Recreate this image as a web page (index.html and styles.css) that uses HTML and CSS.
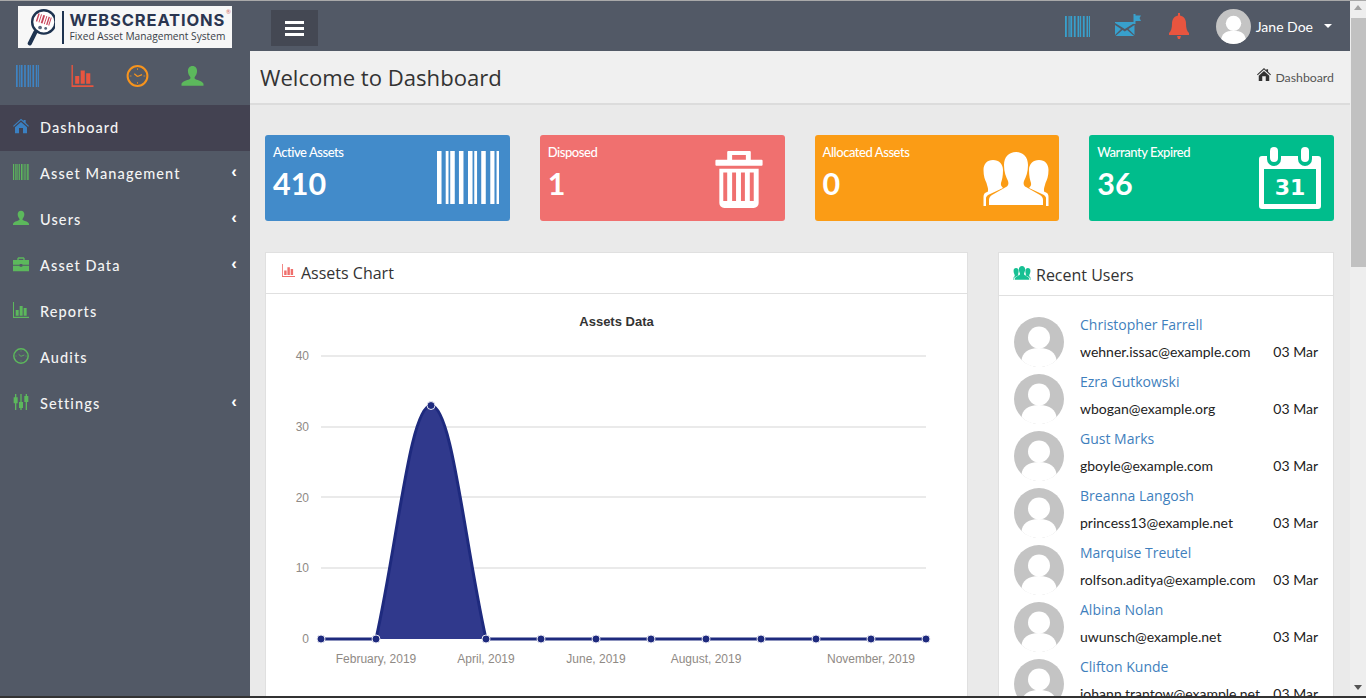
FILE: index.html
```html
<!DOCTYPE html>
<html lang="en">
<head>
<meta charset="utf-8">
<title>Dashboard</title>
<link rel="stylesheet" href="styles.css">
</head>
<body>
<svg class="defs" width="0" height="0" aria-hidden="true">
  <symbol id="i-barcode" viewBox="0 0 178 157" preserveAspectRatio="none"><path fill="currentColor" d="M0 0h13v157H0zM25 0h8v157h-8zM38 0h13v157H38zM63 0h13v157H63zM89 0h13v157H89zM107 0h8v157h-8zM127 0h13v157h-13zM153 0h12v157h-12zM171 0h7v157h-7z"/></symbol>
  <symbol id="i-chart" viewBox="0 0 24 24"><path fill="currentColor" d="M0 0h1.500v22H24v2H0zM4 12h4.500v8.500H4zM10 6h4.500v14.500H10zM16 9h4.500v11.500H16z"/></symbol>
  <symbol id="i-clock" viewBox="0 0 24 24"><circle cx="12" cy="12" r="10.800" fill="none" stroke="currentColor" stroke-width="2.200"/><path d="M12 3.500v2M12 18.500v2M3.500 12h2M18.500 12h2" fill="none" stroke="currentColor" stroke-width=".8"/><path d="M12 12.500l-3.500-3M12 12.500l5-2" fill="none" stroke="currentColor" stroke-width="1.300"/></symbol>
  <symbol id="i-user" viewBox="0 0 24 24"><path fill="currentColor" d="M12 1c3.200 0 5 2.500 5 5.500 0 2.800-1.300 5-2.500 6.500-.5.800-.3 2 .8 2.500 3 1.300 7.700 2.300 8.700 5v2H0v-2c1-2.700 5.700-3.700 8.700-5 1.100-.5 1.300-1.700.8-2.500C8.300 11.500 7 9.300 7 6.500 7 3.500 8.800 1 12 1z"/></symbol>
  <symbol id="i-home" viewBox="0 0 24 24"><path fill="currentColor" d="M12 1l4 3.500V3h3v4.200l5 4.800-1.200 1.300L12 3.500 1.200 13.300 0 12zM3 14l9-8 9 8v9h-6v-8H9v8H3z"/></symbol>
  <symbol id="i-case" viewBox="0 0 24 24"><path fill="currentColor" d="M8 2h8l1.500 1.500V6H24v7H14v-1h-4v1H0V6h6.500V3.500zM8.500 4v2h7V4zM0 14.500h10V16h4v-1.500h10V23H0z"/></symbol>
  <symbol id="i-sliders" viewBox="0 0 24 24"><path fill="currentColor" d="M3 0h2v5h2v9H5v10H3V14H1V5h2zM11 0h2v12h2v9h-2v3h-2v-3H9v-9h2zM19 0h2v3h2v9h-2v12h-2V12h-2V3h2z"/></symbol>
  <symbol id="i-trash" viewBox="0 0 48 58"><path fill="currentColor" d="M13 0h22a1 1 0 0 1 1 1v8h11a1 1 0 0 1 1 1v4a1 1 0 0 1-1 1H1a1 1 0 0 1-1-1v-4a1 1 0 0 1 1-1h11V1a1 1 0 0 1 1-1zm4 4v5h14V4zM4 18h40v35a5 5 0 0 1-5 5H9a5 5 0 0 1-5-5zm4 4v29h4V22zm9 0v29h4V22zm9 0v29h4V22zm9 0v29h4V22z"/></symbol>
  <symbol id="i-users" viewBox="0 0 66 54"><path fill="currentColor" d="M10 8C16 8 20 12 20 18C20 24 19 28 18 31C17.500 33 18.500 34.500 20 36L5 43C4 44 3 45 3 46V54H.5V45C.5 43 1 42 2 41L5 39.500C5.500 36 4 34 3.500 31C2 28 .5 24 .5 18C.5 12 4 8 10 8Z"/><path fill="currentColor" transform="matrix(-1 0 0 1 66 0)" d="M10 8C16 8 20 12 20 18C20 24 19 28 18 31C17.500 33 18.500 34.500 20 36L5 43C4 44 3 45 3 46V54H.5V45C.5 43 1 42 2 41L5 39.500C5.500 36 4 34 3.500 31C2 28 .5 24 .5 18C.5 12 4 8 10 8Z"/><path fill="currentColor" d="M33 0C40 0 45 5 45 13C45 20 43 25 41 29C40 32 41 34 43 35L57 43C59 44 60 46 60 48V53H6V48C6 46 7 44 9 43L23 35C25 34 26 32 25 29C23 25 21 20 21 13C21 5 26 0 33 0Z"/></symbol>
  <symbol id="i-bell" viewBox="0 0 20 26"><path fill="currentColor" d="M9 0h2v2.500c4 .8 6 4 6 8 0 5 1 7.500 3 9.500v2H0v-2c2-2 3-4.500 3-9.500 0-4 2-7.200 6-8zM8 23h4l-1 3H9z"/></symbol>
  <symbol id="i-mail" viewBox="0 0 26 22"><path fill="currentColor" d="M0 8h19.500v1L9.800 15 0 9zM0 11l6 4-6 6zM19.500 11v10l-6-6zM7.500 16l2.300 1.500 2.300-1.500 7 6H.500zM18.500 0h2v1.500h5.500l-1.500 2.500L26 7h-5.500v3h-2z"/></symbol>
  <symbol id="i-avatar" viewBox="0 0 50 50"><circle cx="25" cy="25" r="25" fill="#c4c4c4"/><circle cx="25" cy="20.500" r="11" fill="#fff"/><path fill="#fff" d="M7.500 43c1-7 6-12 17.500-12S41.500 36 42.500 43C38 47.500 32 50 25 50S12 47.500 7.500 43z"/></symbol>
</svg>
<div class="window">
  <div class="app">
    <aside class="sidebar">
      <div class="logo-row">
        <div class="logo">
          <svg class="logo-mark" viewBox="0 0 30 40"><circle cx="18" cy="14" r="12.500" fill="#fff" stroke="#1e3350" stroke-width="2.500"/><g transform="rotate(18 18 13)"><path d="M10 7h1.500v9H10zM13 7h1v9h-1zM15.500 7h2v9h-2zM19 7h1v9h-1zM21.500 7h1.500v9h-1.500zM24 7h1v9h-1z" fill="#c8445a"/></g><circle cx="14" cy="20" r="2" fill="#56657c"/><circle cx="20" cy="21" r="1.500" fill="#56657c"/><path d="M9 25L3 37" stroke="#1e3350" stroke-width="4.500" stroke-linecap="round"/></svg>
          <span class="logo-bar"></span>
          <span class="logo-text"><span class="logo-name">WEBSCREATIONS</span><span class="logo-sub">Fixed Asset Management System</span></span>
          <span class="logo-reg">®</span>
        </div>
      </div>
      <div class="quick">
        <svg class="q-icon c-blue"><use href="#i-barcode"/></svg>
        <svg class="q-icon c-red"><use href="#i-chart"/></svg>
        <svg class="q-icon c-orange"><use href="#i-clock"/></svg>
        <svg class="q-icon c-green"><use href="#i-user"/></svg>
      </div>
      <nav class="menu">
        <a class="item active"><svg class="m-icon c-home"><use href="#i-home"/></svg><span class="m-label">Dashboard</span></a>
        <a class="item"><svg class="m-icon c-green"><use href="#i-barcode"/></svg><span class="m-label">Asset Management</span><span class="chev">‹</span></a>
        <a class="item"><svg class="m-icon c-green"><use href="#i-user"/></svg><span class="m-label">Users</span><span class="chev">‹</span></a>
        <a class="item"><svg class="m-icon c-green"><use href="#i-case"/></svg><span class="m-label">Asset Data</span><span class="chev">‹</span></a>
        <a class="item"><svg class="m-icon c-green"><use href="#i-chart"/></svg><span class="m-label">Reports</span></a>
        <a class="item"><svg class="m-icon c-green"><use href="#i-clock"/></svg><span class="m-label">Audits</span></a>
        <a class="item"><svg class="m-icon c-green"><use href="#i-sliders"/></svg><span class="m-label">Settings</span><span class="chev">‹</span></a>
      </nav>
    </aside>
    <div class="main">
      <header class="topbar">
        <button class="burger"><span></span><span></span><span></span></button>
        <div class="top-right">
          <svg class="t-barcode"><use href="#i-barcode"/></svg>
          <svg class="t-mail"><use href="#i-mail"/></svg>
          <svg class="t-bell"><use href="#i-bell"/></svg>
          <div class="user"><svg class="t-avatar"><use href="#i-avatar"/></svg><span class="user-name">Jane Doe</span><span class="caret"></span></div>
        </div>
      </header>
      <div class="page-head">
        <h1 class="title">Welcome to Dashboard</h1>
        <div class="crumb"><svg class="crumb-icon"><use href="#i-home"/></svg><span>Dashboard</span></div>
      </div>
      <div class="content">
        <section class="cards">
          <div class="card bg-blue"><div><div class="card-label">Active Assets</div><div class="card-num">410</div></div><svg class="card-barcode"><use href="#i-barcode"/></svg></div>
          <div class="card bg-red"><div><div class="card-label">Disposed</div><div class="card-num">1</div></div><svg class="card-trash"><use href="#i-trash"/></svg></div>
          <div class="card bg-orange"><div><div class="card-label">Allocated Assets</div><div class="card-num">0</div></div><svg class="card-users"><use href="#i-users"/></svg></div>
          <div class="card bg-teal"><div><div class="card-label">Warranty Expired</div><div class="card-num">36</div></div>
            <svg class="card-cal" viewBox="0 0 62 62">
              <path class="cal-frame" fill-rule="evenodd" d="M3 9H59a3 3 0 0 1 3 3V59a3 3 0 0 1-3 3H3a3 3 0 0 1-3-3V12a3 3 0 0 1 3-3zM5 22V57H57V22z"/>
              <rect class="cal-halo" x="8" y="0" width="14" height="19" rx="7"/><rect class="cal-halo" x="39" y="0" width="14" height="19" rx="7"/>
              <rect class="cal-ring" x="11" y="0" width="8" height="15" rx="4"/><rect class="cal-ring" x="42" y="0" width="8" height="15" rx="4"/>
              <text class="cal-num" x="31" y="47.500" text-anchor="middle">31</text>
            </svg>
          </div>
        </section>
        <section class="panels">
          <div class="panel chart-panel">
            <div class="panel-head chart-head"><svg class="p-icon c-pink"><use href="#i-chart"/></svg><span>Assets Chart</span></div>
            <svg class="chart" viewBox="266 294 701 402" width="701" height="402">
              <text class="ch-title" x="616.500" y="325.500" text-anchor="middle">Assets Data</text>
              <g class="grid"><path d="M321 356H926M321 427H926M321 497H926M321 568H926"/></g>
              <g class="y" text-anchor="end"><text x="309" y="360">40</text><text x="309" y="431">30</text><text x="309" y="502">20</text><text x="309" y="572">10</text><text x="309" y="643">0</text></g>
              <path class="area" d="M321 639L376 639C398 540 410 405.500 431 405.500C452 405.500 464 540 486 639L926 639Z"/>
              <path class="line" d="M321 639L376 639C398 540 410 405.500 431 405.500C452 405.500 464 540 486 639L926 639"/>
              <g class="pts">
                <circle cx="321" cy="639" r="4"/><circle cx="376" cy="639" r="4"/><circle cx="431" cy="405.500" r="4"/><circle cx="486" cy="639" r="4"/><circle cx="541" cy="639" r="4"/><circle cx="596" cy="639" r="4"/><circle cx="651" cy="639" r="4"/><circle cx="706" cy="639" r="4"/><circle cx="761" cy="639" r="4"/><circle cx="816" cy="639" r="4"/><circle cx="871" cy="639" r="4"/><circle cx="926" cy="639" r="4"/>
              </g>
              <g class="x" text-anchor="middle"><text x="376" y="663">February, 2019</text><text x="486" y="663">April, 2019</text><text x="596" y="663">June, 2019</text><text x="706" y="663">August, 2019</text><text x="871" y="663">November, 2019</text></g>
            </svg>
          </div>
          <div class="panel users-panel">
            <div class="panel-head users-head"><svg class="p-icon2 c-teal"><use href="#i-users"/></svg><span>Recent Users</span></div>
            <ul class="users">
              <li class="u"><svg class="u-av"><use href="#i-avatar"/></svg><div class="u-info"><a class="u-name">Christopher Farrell</a><div class="u-line"><span>wehner.issac@example.com</span><span>03 Mar</span></div></div></li>
              <li class="u"><svg class="u-av"><use href="#i-avatar"/></svg><div class="u-info"><a class="u-name">Ezra Gutkowski</a><div class="u-line"><span>wbogan@example.org</span><span>03 Mar</span></div></div></li>
              <li class="u"><svg class="u-av"><use href="#i-avatar"/></svg><div class="u-info"><a class="u-name">Gust Marks</a><div class="u-line"><span>gboyle@example.com</span><span>03 Mar</span></div></div></li>
              <li class="u"><svg class="u-av"><use href="#i-avatar"/></svg><div class="u-info"><a class="u-name">Breanna Langosh</a><div class="u-line"><span>princess13@example.net</span><span>03 Mar</span></div></div></li>
              <li class="u"><svg class="u-av"><use href="#i-avatar"/></svg><div class="u-info"><a class="u-name">Marquise Treutel</a><div class="u-line"><span>rolfson.aditya@example.com</span><span>03 Mar</span></div></div></li>
              <li class="u"><svg class="u-av"><use href="#i-avatar"/></svg><div class="u-info"><a class="u-name">Albina Nolan</a><div class="u-line"><span>uwunsch@example.net</span><span>03 Mar</span></div></div></li>
              <li class="u"><svg class="u-av"><use href="#i-avatar"/></svg><div class="u-info"><a class="u-name">Clifton Kunde</a><div class="u-line"><span>johann.trantow@example.net</span><span>03 Mar</span></div></div></li>
            </ul>
          </div>
        </section>
      </div>
    </div>
    <div class="scrollbar"><span class="arrow up"></span><span class="thumb"></span><span class="track"></span><span class="arrow down"></span></div>
  </div>
</div>
</body>
</html>
```

FILE: styles.css
```css
* { box-sizing: border-box; }
html, body { margin: 0; height: 698px; overflow: hidden; }
body { font-family: "Lato", "Liberation Sans", sans-serif; background: #eaeaea; }
.defs { position: absolute; }
.window { height: 698px; border-top: 1px solid #a9a9a9; border-bottom: 2px solid #333; overflow: hidden; }
.app { display: flex; height: 100%; }

.c-blue { color: #3e84c4; }
.c-red { color: #e8553f; }
.c-orange { color: #f7941d; }
.c-green { color: #5cb85c; }
.c-home { color: #3a80c2; }
.c-pink { color: #ef6f6c; }
.c-teal { color: #17c093; }

.sidebar { width: 250px; flex: none; background: #525966; height: 697px; }
.logo-row { height: 50px; padding: 5px 0 0 18px; }
.logo { position: relative; width: 214px; height: 42px; background: #f7f7f7; display: flex; align-items: center; padding-left: 9px; }
.logo-mark { width: 28px; height: 39px; flex: none; }
.logo-bar { width: 1.500px; height: 33px; background: #1e3350; flex: none; margin: 0 6px 0 7px; }
.logo-text { display: flex; flex-direction: column; }
.logo-name { font-family: "Inter", sans-serif; font-weight: 700; font-size: 16.500px; line-height: 18px; color: #2a3550; letter-spacing: .85px; white-space: nowrap; }
.logo-sub { font-family: "Open Sans", sans-serif; font-size: 10.200px; line-height: 15px; color: #3a3f48; white-space: nowrap; }
.logo-reg { position: absolute; right: 1px; top: 2px; font-size: 6px; color: #d06a6a; }
.quick { height: 54px; display: flex; align-items: center; gap: 32px; padding: 0 0 4px 16px; }
.q-icon { width: 23px; height: 22px; flex: none; }

.item { display: flex; align-items: center; height: 46px; padding: 0 13px; color: #fff; }
.item.active { background: #434251; }
.m-icon { width: 16px; height: 16px; flex: none; margin: -5px 11px 0 0; }
.m-label { flex: 1; font-size: 14.500px; font-weight: 500; letter-spacing: 1.100px; color: #f4f4f4; margin-top: -2px; }
.chev { font-family: "Liberation Sans", sans-serif; font-size: 17px; font-weight: 700; line-height: 1; margin: -6px 0 0 0; }

.main { flex: 1; min-width: 0; display: flex; flex-direction: column; }
.topbar { height: 50px; flex: none; background: #525966; display: flex; align-items: center; justify-content: space-between; padding: 0 18px 0 21px; }
.burger { width: 47px; height: 36px; margin-top: 4px; border: 0; background: #444853; display: flex; flex-direction: column; justify-content: center; align-items: center; gap: 3px; padding: 0; }
.burger span { width: 19px; height: 3px; background: #fff; }
.top-right { display: flex; align-items: center; }
.t-barcode { width: 25px; height: 21px; color: #38a0cc; margin-right: 25px; }
.t-mail { width: 26px; height: 22px; color: #38a0cc; margin: -2px 28px 0 0; }
.t-bell { width: 20px; height: 26px; color: #e8553f; margin: -1px 27px 0 0; }
.t-avatar { width: 35px; height: 35px; margin-right: 5px; }
.user { display: flex; align-items: center; }
.user-name { font-size: 14px; color: #fff; }
.caret { width: 0; height: 0; border: 4.500px solid transparent; border-top: 4.500px solid #fff; border-bottom: 0; margin-left: 11px; }

.page-head { height: 54px; flex: none; background: #f0f0f0; border-bottom: 2px solid #dcdcdc; display: flex; align-items: center; justify-content: space-between; padding: 0 16px 0 10px; }
.title { margin: 0; font-family: "Open Sans", sans-serif; font-weight: 400; font-size: 22.100px; color: #333; }
.crumb { display: flex; align-items: center; font-size: 12.300px; color: #555; gap: 4px; }
.crumb-icon { width: 14px; height: 15px; color: #333; margin-top: -5px; }

.content { flex: 1; min-height: 0; padding: 30px 16px 0 15px; overflow: hidden; }
.cards { display: grid; grid-template-columns: repeat(4, 1fr); gap: 30px; }
.card { height: 86px; border-radius: 3px; color: #fff; display: flex; justify-content: space-between; padding: 0 12px 0 8px; }
.bg-blue { background: #428bca; }
.bg-red { background: #f0706f; }
.bg-orange { background: #fb9c15; }
.bg-teal { background: #00bd8c; }
.card-label { font-size: 13px; font-weight: 500; margin-top: 9px; line-height: 16px; letter-spacing: -.45px; }
.card-num { font-family: "Lato", sans-serif; font-size: 30.500px; font-weight: 700; line-height: 42px; margin-top: 2px; }
.card-barcode { width: 62px; height: 53px; margin: 16px -1px 0 0; }
.card-trash { width: 48px; height: 57px; margin-top: 16px; margin-right: 10px; }
.card-users { width: 66px; height: 54px; margin-top: 17px; margin-right: -2px; }
.card-cal { width: 62px; height: 62px; margin: 12px 1px 0 0; flex: none; }
.cal-frame, .cal-ring { fill: #fff; }
.cal-halo { fill: #00bd8c; }
.cal-num { font-family: "DejaVu Sans", sans-serif; font-weight: 700; font-size: 22px; fill: #fff; }

.panels { display: flex; gap: 30px; margin-top: 31px; align-items: flex-start; }
.panel { background: #fff; border: 1px solid #e0e0e0; }
.chart-panel { width: 703px; flex: none; height: 500px; }
.users-panel { flex: 1; min-width: 0; height: 500px; }
.panel-head { display: flex; align-items: center; font-family: "Open Sans", sans-serif; font-size: 16px; color: #333; border-bottom: 1px solid #e0e0e0; padding-left: 16px; }
.chart-head { height: 41px; padding-left: 15px; }
.users-head { height: 43px; padding: 2px 0 0 14px; }
.p-icon { width: 15px; height: 13px; margin: -5px 5px 0 0; }
.p-icon2 { width: 18px; height: 14px; margin: -5px 5px 0 0; }
.chart { display: block; }
.ch-title { font-family: "Liberation Sans", sans-serif; font-size: 13px; font-weight: 700; fill: #333; }
.grid path { stroke: #e4e4e4; stroke-width: 1.500; fill: none; }
.y text, .x text { font-family: "Liberation Sans", sans-serif; font-size: 12px; fill: #8f8a85; }
.area { fill: #30398c; }
.line { fill: none; stroke: #1e2a7e; stroke-width: 3; }
.pts circle { fill: #1e2a7e; stroke: #e8e8f2; stroke-width: 1; }

.users { list-style: none; margin: 0; padding: 21px 15px 0 15px; }
.u { display: flex; height: 57px; }
.u-av { width: 50px; height: 50px; flex: none; margin-right: 16px; }
.u-info { flex: 1; min-width: 0; }
.u-name { display: block; font-family: "Open Sans", sans-serif; font-size: 14px; line-height: 18px; color: #3f7fbd; margin-top: -1px; }
.u-line { display: flex; justify-content: space-between; font-size: 14px; line-height: 18px; color: #222; margin-top: 9px; }

.scrollbar { width: 16px; flex: none; background: #eee; display: flex; flex-direction: column; align-items: center; height: 697px; }
.arrow { width: 16px; height: 17px; flex: none; position: relative; }
.arrow::after { content: ""; position: absolute; left: 4px; width: 0; height: 0; border: 4px solid transparent; }
.arrow.up::after { top: 4px; border-top: 0; border-bottom: 5px solid #a3a3a3; }
.arrow.down::after { top: 4px; border-bottom: 0; border-top: 5px solid #555; }
.thumb { width: 15px; height: 249px; background: #c1c1c1; flex: none; margin-left: 1px; }
.track { flex: 1; }
```
